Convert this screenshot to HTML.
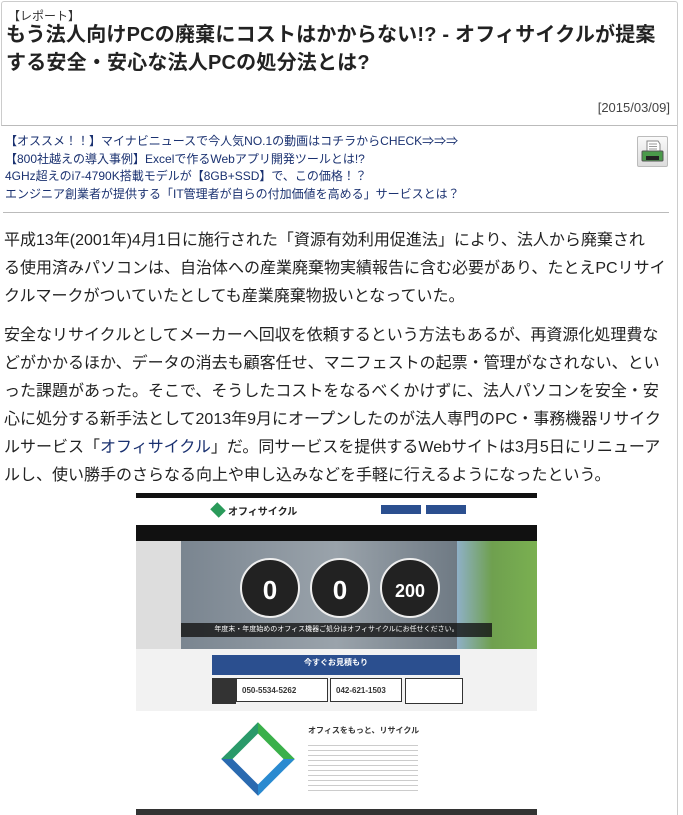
<!DOCTYPE html>
<html><head><meta charset="utf-8"><style>
body{margin:0;width:683px;height:815px;overflow:hidden;background:#fff;font-family:"Liberation Sans","Noto Sans CJK JP",sans-serif;color:#333}
.hdr{position:absolute;left:1px;top:1px;width:675px;height:123px;border:1px solid #ccc;border-bottom:1px solid #bbb;border-radius:3px 3px 0 0}
.vline{position:absolute;left:677px;top:124px;width:1px;height:691px;background:#ccc}
.cat{position:absolute;left:8px;top:7px;font-size:12px;color:#333}
.title{position:absolute;left:6px;top:21px;width:665px;font-size:20px;font-weight:bold;line-height:28px;color:#222;letter-spacing:0.2px}
.date{position:absolute;right:13px;top:100px;font-size:13px;color:#444}
.links{position:absolute;left:5px;top:133px;font-size:12px;line-height:17.5px;color:#1a3170}
.print{position:absolute;left:637px;top:136px;width:29px;height:29px;border:1px solid #bbb;border-radius:2px;background:linear-gradient(#fafafa,#ddd)}
.sep{position:absolute;left:3px;top:212px;width:666px;height:1px;background:#bbb}
.body{position:absolute;left:4px;top:227px;width:680px;font-size:16px;line-height:28px;color:#222;white-space:nowrap}
.body p{margin:0 0 11px 0}
.img{position:absolute;left:136px;top:493px;width:401px;height:322px;background:#f2f2f2;overflow:hidden}
</style></head><body>
<div class="hdr"></div>
<div class="vline"></div>
<div class="cat">【レポート】</div>
<div class="title">もう法人向けPCの廃棄にコストはかからない!? - オフィサイクルが提案する安全・安心な法人PCの処分法とは?</div>
<div class="date">[2015/03/09]</div>
<div class="links">【オススメ！！】マイナビニュースで今人気NO.1の動画はコチラからCHECK⇒⇒⇒<br>【800社越えの導入事例】Excelで作るWebアプリ開発ツールとは!?<br>4GHz超えのi7-4790K搭載モデルが【8GB+SSD】で、この価格！？<br>エンジニア創業者が提供する「IT管理者が自らの付加価値を高める」サービスとは？</div>
<div class="print"><svg width="29" height="29"><path d="M9 4h11l2 3v8H9z" fill="#fff" stroke="#888"/><path d="M11 7h8M11 9.5h8M11 12h8" stroke="#999"/><rect x="4" y="14" width="21" height="10" rx="1" fill="#4a9a4a" stroke="#555"/><rect x="8" y="19" width="13" height="4" fill="#222"/></svg></div>
<div class="sep"></div>
<div class="body">
<p>平成13年(2001年)4月1日に施行された「資源有効利用促進法」により、法人から廃棄され<br>る使用済みパソコンは、自治体への産業廃棄物実績報告に含む必要があり、たとえPCリサイ<br>クルマークがついていたとしても産業廃棄物扱いとなっていた。</p>
<p>安全なリサイクルとしてメーカーへ回収を依頼するという方法もあるが、再資源化処理費な<br>どがかかるほか、データの消去も顧客任せ、マニフェストの起票・管理がなされない、とい<br>った課題があった。そこで、そうしたコストをなるべくかけずに、法人パソコンを安全・安<br>心に処分する新手法として2013年9月にオープンしたのが法人専門のPC・事務機器リサイク<br>ルサービス「<span style="color:#1a3170">オフィサイクル</span>」だ。同サービスを提供するWebサイトは3月5日にリニューア<br>ルし、使い勝手のさらなる向上や申し込みなどを手軽に行えるようになったという。</p>
</div>
<div class="img">
<div style="position:absolute;left:0;top:0;width:401px;height:5px;background:#111"></div>
<div style="position:absolute;left:0;top:5px;width:401px;height:27px;background:#fff"></div>
<div style="position:absolute;left:76px;top:12px;width:12px;height:10px;background:#2a9a5a;transform:rotate(45deg)"></div>
<div style="position:absolute;left:92px;top:10px;font-size:10px;font-weight:bold;color:#222">オフィサイクル</div>
<div style="position:absolute;left:245px;top:12px;width:40px;height:9px;background:#2b4f8f"></div>
<div style="position:absolute;left:290px;top:12px;width:40px;height:9px;background:#2b4f8f"></div>
<div style="position:absolute;left:0;top:32px;width:401px;height:16px;background:#111"></div>
<div style="position:absolute;left:0;top:48px;width:401px;height:108px;background:linear-gradient(90deg,#ddd 0,#ddd 45px,#7a8590 45px,#9aa3ab 50%,#6f7a84 80%,#8fb0c8 316px,#6fa04f 356px,#7ab050 401px)"></div>
<div style="position:absolute;left:45px;top:130px;width:311px;height:14px;background:rgba(20,20,20,.8);color:#fff;font-size:7px;line-height:14px;text-align:center">年度末・年度始めのオフィス機器ご処分はオフィサイクルにお任せください。</div>
<div style="position:absolute;left:104px;top:65px;width:56px;height:56px;border-radius:50%;background:#222;border:2px solid #eee;color:#fff;font-size:26px;text-align:center;line-height:60px;font-weight:bold">0</div>
<div style="position:absolute;left:174px;top:65px;width:56px;height:56px;border-radius:50%;background:#222;border:2px solid #eee;color:#fff;font-size:26px;text-align:center;line-height:60px;font-weight:bold">0</div>
<div style="position:absolute;left:244px;top:65px;width:56px;height:56px;border-radius:50%;background:#222;border:2px solid #eee;color:#fff;font-size:18px;text-align:center;line-height:62px;font-weight:bold">200</div>
<div style="position:absolute;left:76px;top:162px;width:248px;height:20px;background:#2b4f8f;color:#fff;font-size:8px;font-weight:bold;text-align:center;line-height:16px">今すぐお見積もり</div>
<div style="position:absolute;left:76px;top:185px;width:24px;height:26px;background:#333"></div>
<div style="position:absolute;left:100px;top:185px;width:92px;height:24px;border:1px solid #333;background:#fff;font-size:8px;font-weight:bold;line-height:24px;padding-left:5px;box-sizing:border-box">050-5534-5262</div>
<div style="position:absolute;left:194px;top:185px;width:72px;height:24px;border:1px solid #333;background:#fff;font-size:8px;font-weight:bold;line-height:24px;padding-left:5px;box-sizing:border-box">042-621-1503</div>
<div style="position:absolute;left:269px;top:185px;width:56px;height:24px;border:1px solid #333;background:#fff"></div>
<div style="position:absolute;left:0;top:218px;width:401px;height:100px;background:#fff"></div>
<div style="position:absolute;left:96px;top:240px;width:36px;height:36px;border:8px solid #2a8a4a;border-color:#3ab04a #2a8ad0 #2a6ab0 #2a9a6a;transform:rotate(45deg)"></div>
<div style="position:absolute;left:172px;top:232px;font-size:8px;font-weight:bold;color:#333">オフィスをもっと、リサイクル</div>
<div style="position:absolute;left:172px;top:248px;width:110px;height:50px;background:repeating-linear-gradient(#fff 0,#fff 4px,#ccc 4px,#ccc 5px)"></div>
<div style="position:absolute;left:0;top:316px;width:401px;height:6px;background:#333"></div>
</div>
</body></html>
